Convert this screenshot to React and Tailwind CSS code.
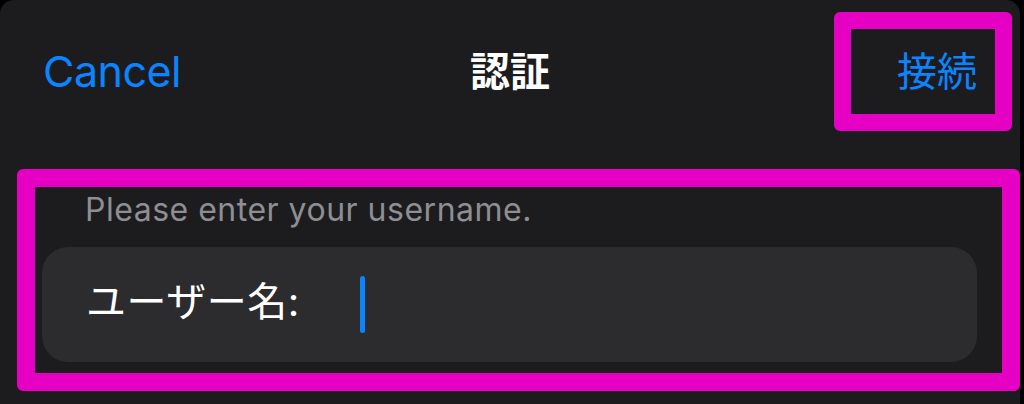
export default function App() {
  const font = { fontFamily: "Inter, 'Noto Sans CJK JP', sans-serif" };
  return (
    <div className="w-[1024px] h-[404px] bg-black overflow-hidden" style={font}>
      <div className="w-[1020px] h-[404px] bg-[#1c1c1e] rounded-t-[14px] flex flex-col">
        <div className="grid grid-cols-3 items-center mt-[12px] h-[119px]">
          <div className="pl-[43px] text-[43px] tracking-[-0.5px] leading-none text-[#0a84ff]">Cancel</div>
          <div className="text-center text-[40px] leading-none font-bold text-white">認証</div>
          <div className="flex justify-end pr-[8px]">
            <div className="w-[178px] h-[119px] border-[17px] border-[#e600c3] rounded-[6px] flex items-center justify-end pr-[18px] text-[40px] leading-none text-[#0a84ff]">
              接続
            </div>
          </div>
        </div>
        <div className="ml-[17px] mt-[38px] w-[1003px] h-[222px] border-[18px] border-[#e600c3] rounded-[6px] flex flex-col pl-[7px] pr-[25px]">
          <div className="mt-[7px] pl-[43px] text-[32px] tracking-[0.5px] leading-none text-[#8e8e93]">Please enter your username.</div>
          <div className="mt-[21px] h-[115px] rounded-[26px] bg-[#2c2c2e] flex items-center pl-[44px]">
            <span className="text-[40px] tracking-[0.5px] leading-none text-white -mt-[6px]">ユーザー名:</span>
            <span className="ml-[60px] w-[5px] h-[57px] rounded-full bg-[#0a84ff]"></span>
          </div>
        </div>
      </div>
    </div>
  );
}
